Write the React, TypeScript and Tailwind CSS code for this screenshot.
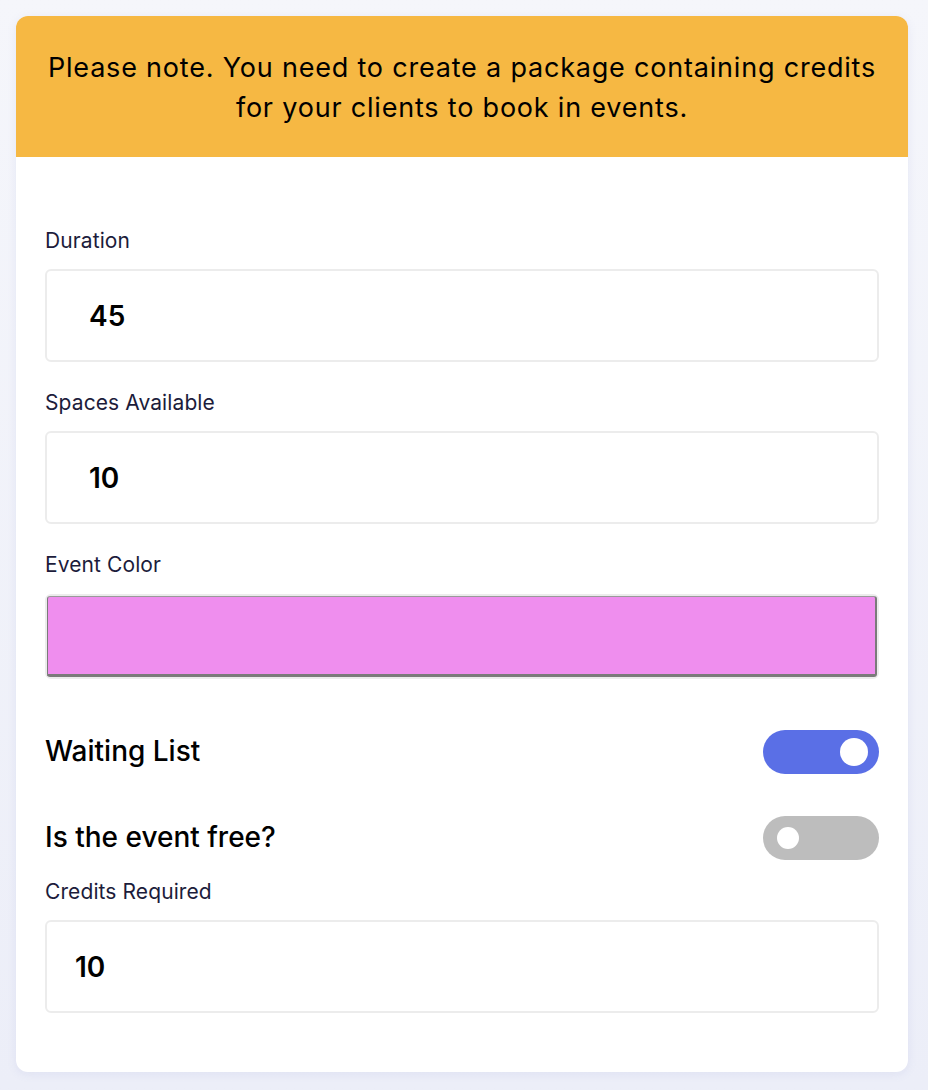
import React from "react";

const FONT = "font-['Inter',_'Open_Sans',_sans-serif]";

function Field({ label, value, padLeft }: { label: string; value: string; padLeft: string }) {
  return (
    <div className="flex flex-col">
      <label className="text-[21px] leading-[24px] tracking-[0.1px] text-[#1c1c3b]">{label}</label>
      <div className={`mt-4 flex h-[93px] items-center rounded-md border-2 border-[#ececec] ${padLeft}`}>
        <span className="text-[28px] font-semibold text-black">{value}</span>
      </div>
    </div>
  );
}

function Toggle({ on }: { on: boolean }) {
  return (
    <div
      className={`flex h-[44px] w-[116px] shrink-0 items-center rounded-full ${
        on ? "justify-end bg-[#5a6fe6] pr-[11px]" : "justify-start bg-[#bdbdbd] pl-[14px]"
      }`}
    >
      <span className={`rounded-full bg-white ${on ? "h-[28px] w-[28px]" : "h-[22px] w-[22px]"}`} />
    </div>
  );
}

export default function App() {
  return (
    <div className={`min-h-[1090px] w-full bg-gradient-to-b from-[#f5f6fb] to-[#eceef8] pb-4 pl-4 pr-5 pt-4 ${FONT}`}>
      <div className="overflow-hidden rounded-xl bg-white shadow-[0_2px_10px_rgba(120,130,200,0.12)]">
        {/* ── Notice ── */}
        <div className="bg-[#f6b843] px-4 pb-[29px] pt-[32px] text-center text-[27px] leading-[40px] tracking-[0.8px] text-black">
          Please note. You need to create a package containing credits
          <br />
          for your clients to book in events.
        </div>

        {/* ── Form ── */}
        <div className="flex flex-col px-[29px] pb-[59px] pt-[72px]">
          <Field label="Duration" value="45" padLeft="pl-[42px]" />
          <div className="mt-[29px]">
            <Field label="Spaces Available" value="10" padLeft="pl-[42px]" />
          </div>

          <div className="mt-[29px] flex flex-col">
            <label className="text-[21px] leading-[24px] tracking-[0.1px] text-[#1c1c3b]">Event Color</label>
            <div className="mt-[17px] rounded-md border-2 border-[#ececec]">
              <div className="h-[81px] rounded-[3px] border border-b-[3px] border-r-2 border-[#7a7a7a] border-t-[#9a9a9a] bg-[#ef8eee]" />
            </div>
          </div>

          <div className="mt-[51px] flex items-center justify-between">
            <span className="-mt-[3px] text-[28px] font-medium text-black">Waiting List</span>
            <Toggle on />
          </div>

          <div className="mt-[42px] flex items-center justify-between">
            <span className="-mt-[3px] text-[28px] font-medium text-black">Is the event free?</span>
            <Toggle on={false} />
          </div>

          <div className="mt-[20px]">
            <Field label="Credits Required" value="10" padLeft="pl-[28px]" />
          </div>
        </div>
      </div>
    </div>
  );
}
